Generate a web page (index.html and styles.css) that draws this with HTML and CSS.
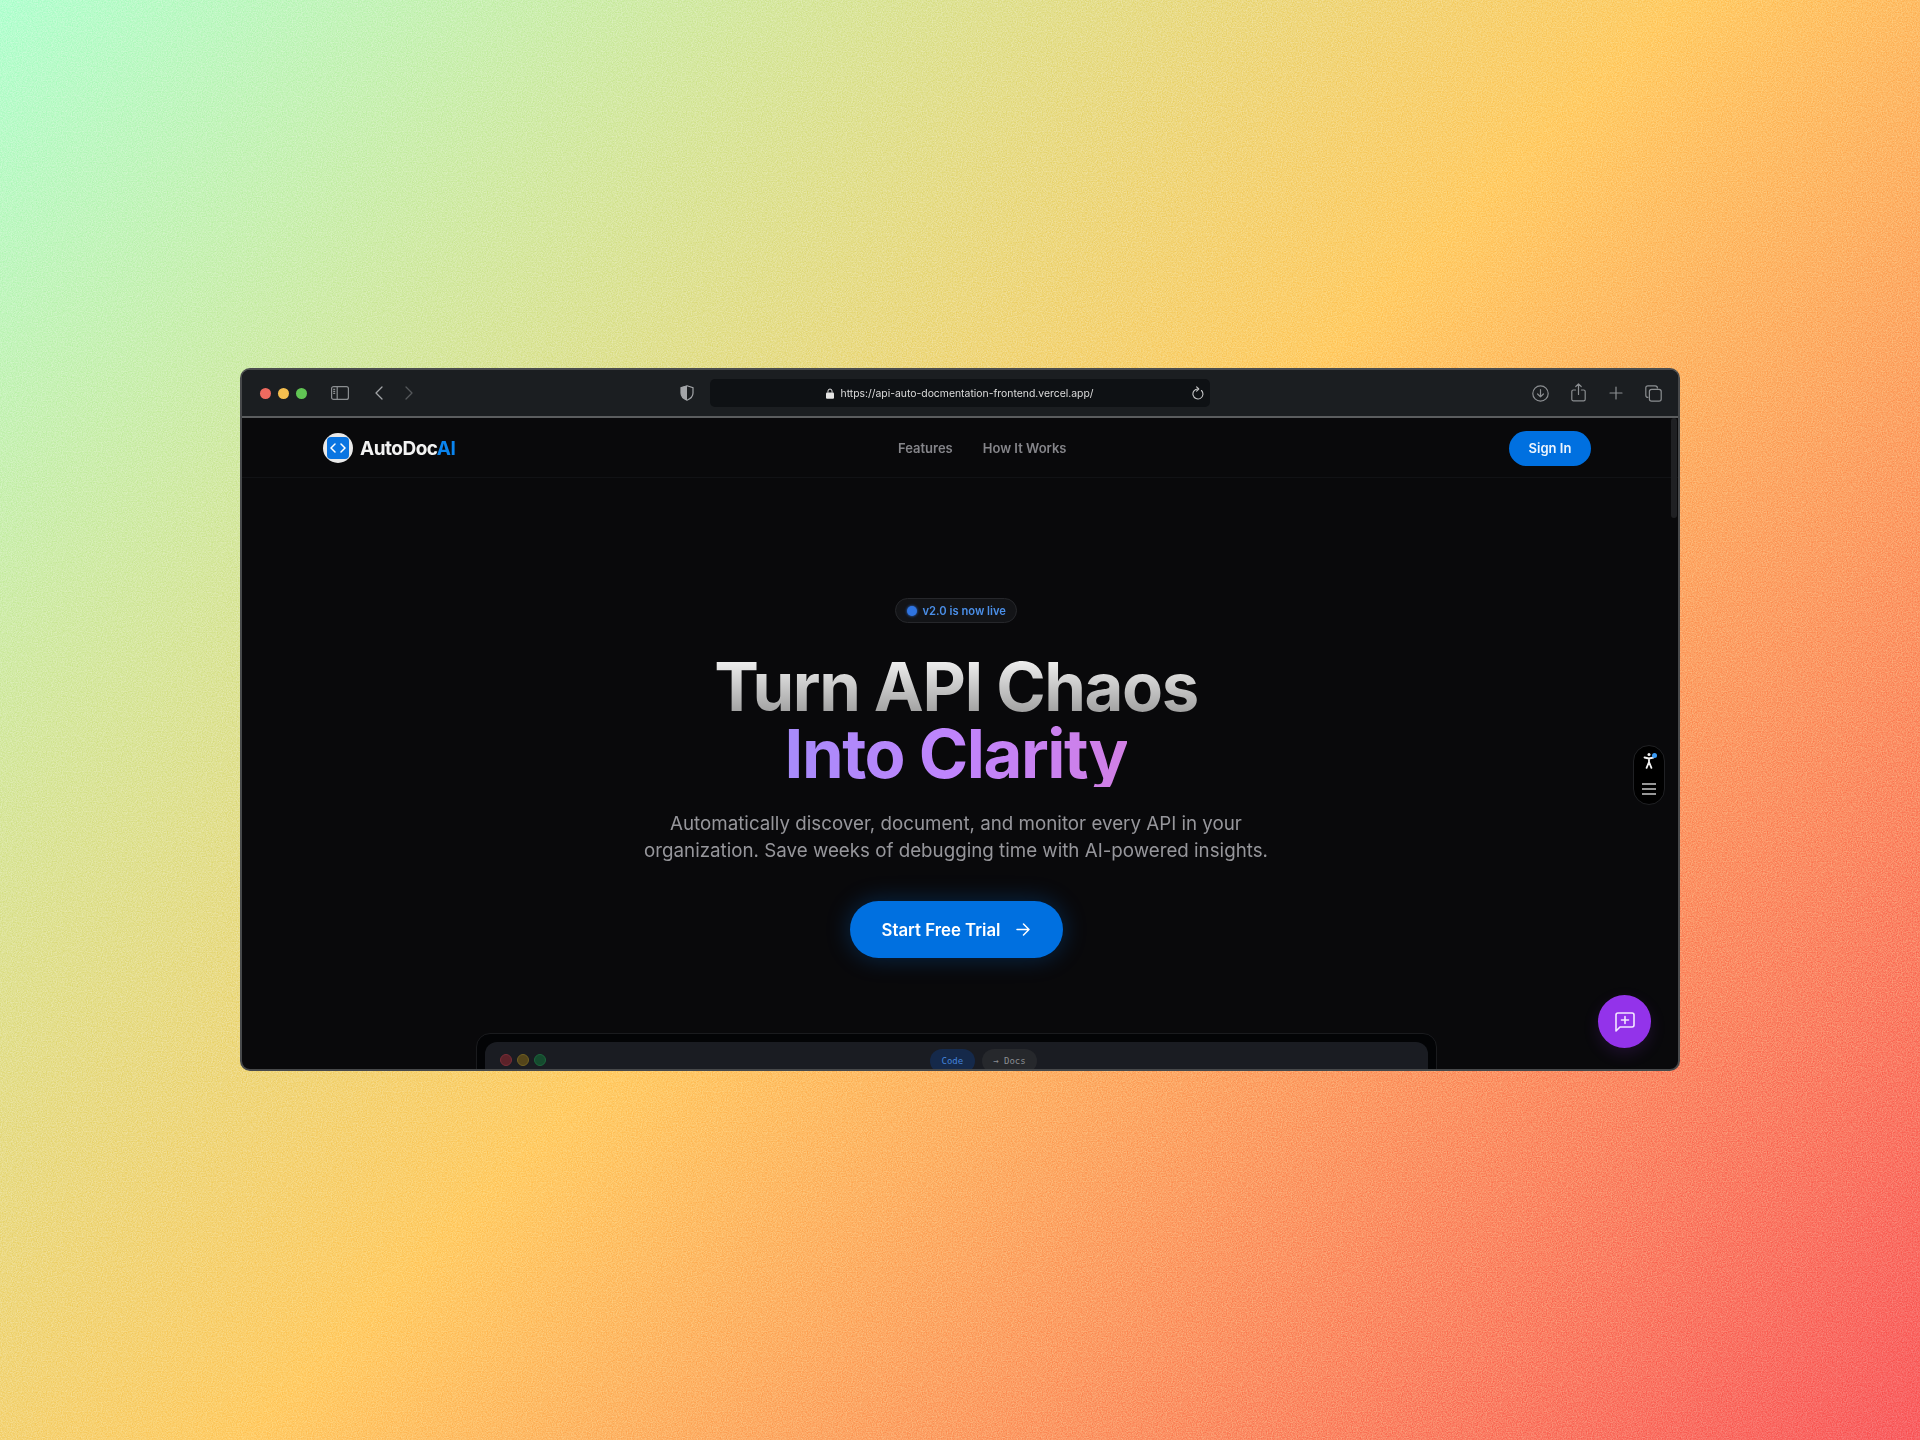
FILE: index.html
```html
<!DOCTYPE html>
<html lang="en">
<head>
  <meta charset="UTF-8" />
  <meta name="viewport" content="width=device-width, initial-scale=1.0"/>
  <title>AutoDocAI</title>
  <link rel="stylesheet" href="styles.css">
</head>
<body>

  <svg class="grain" width="1920" height="1440" aria-hidden="true">
    <filter id="noise" x="0" y="0" width="100%" height="100%" color-interpolation-filters="sRGB">
      <feTurbulence type="fractalNoise" baseFrequency="0.8" numOctaves="2" stitchTiles="stitch"/>
      <feColorMatrix type="matrix" values="1.8 0 0 0 -0.4  1.8 0 0 0 -0.4  1.8 0 0 0 -0.4  0 0 0 0 1"/>
    </filter>
    <rect width="1920" height="1440" filter="url(#noise)"/>
  </svg>

  <div class="window">
    <div class="toolbar">
      <div class="toolbar-left">
        <div class="lights">
          <span class="light red"></span>
          <span class="light yellow"></span>
          <span class="light green"></span>
        </div>
        <svg class="tool sidebar-icon" width="18" height="14" viewBox="0 0 18 14" fill="none" stroke="#8b8e91" stroke-width="1.2">
          <rect x="0.6" y="0.6" width="16.8" height="12.8" rx="2"/>
          <path d="M6.2 0.6v12.8M2.2 3.4h2M2.2 5.4h2M2.2 7.4h2"/>
        </svg>
        <svg class="tool back-icon" width="10" height="14" viewBox="0 0 10 14" fill="none" stroke="#a3a5a8" stroke-width="1.3" stroke-linecap="round" stroke-linejoin="round">
          <path d="M8 1L2 7l6 6"/>
        </svg>
        <svg class="tool forward-icon" width="10" height="14" viewBox="0 0 10 14" fill="none" stroke="#55585b" stroke-width="1.3" stroke-linecap="round" stroke-linejoin="round">
          <path d="M2 1l6 6-6 6"/>
        </svg>
      </div>

      <svg class="shield" width="14" height="16" viewBox="0 0 14 16">
        <path d="M7 0.8L13 2.6V8c0 3.4-2.6 5.8-6 7.2C3.6 13.8 1 11.4 1 8V2.6z" fill="none" stroke="#a3a5a8" stroke-width="1.2"/>
        <path d="M7 0.8L1 2.6V8c0 3.4 2.6 5.8 6 7.2z" fill="#a3a5a8"/>
      </svg>

      <div class="address">
        <svg width="8" height="11" viewBox="0 0 9 12">
          <path d="M2.2 5V3.3a2.3 2.3 0 0 1 4.6 0V5" fill="none" stroke="#e4e4e4" stroke-width="1.1"/>
          <rect y="5" width="9" height="7" rx="1.2" fill="#e4e4e4"/>
        </svg>
        <span>https://api-auto-docmentation-frontend.vercel.app/</span>
        <svg class="reload" width="12" height="14" viewBox="0 0 12 14" fill="none" stroke="#c4c5c6" stroke-width="1.1" stroke-linecap="round" stroke-linejoin="round">
          <path d="M6 3A5 5 0 1 0 9.5 4.5"/>
          <path d="M4.6 0.8L6.8 3 4.6 5.2"/>
        </svg>
      </div>

      <div class="toolbar-right">
        <svg width="17" height="17" viewBox="0 0 17 17" fill="none" stroke="#8b8e91" stroke-width="1.2" stroke-linecap="round" stroke-linejoin="round">
          <circle cx="8.5" cy="8.5" r="7.7"/>
          <path d="M8.5 4.6v7.2M5.6 9l2.9 2.9L11.4 9"/>
        </svg>
        <svg class="share-icon" width="15" height="19" viewBox="0 0 15 19" fill="none" stroke="#8b8e91" stroke-width="1.2" stroke-linecap="round" stroke-linejoin="round">
          <path d="M4.6 7H2.4a1.6 1.6 0 0 0-1.6 1.6v7.6a1.6 1.6 0 0 0 1.6 1.6h10.2a1.6 1.6 0 0 0 1.6-1.6V8.6A1.6 1.6 0 0 0 12.6 7h-2.2"/>
          <path d="M7.5 11.5V1M4.8 3.5L7.5 0.9l2.7 2.6"/>
        </svg>
        <svg width="14" height="14" viewBox="0 0 14 14" fill="none" stroke="#8b8e91" stroke-width="1.2" stroke-linecap="round">
          <path d="M7 1v12M1 7h12"/>
        </svg>
        <svg width="17" height="17" viewBox="0 0 17 17" fill="none" stroke="#8b8e91" stroke-width="1.2">
          <path d="M3.4 12.4H3a2.2 2.2 0 0 1-2.2-2.2V3A2.2 2.2 0 0 1 3 0.8h7.2A2.2 2.2 0 0 1 12.4 3v.4"/>
          <rect x="4.4" y="4.4" width="11.8" height="11.8" rx="2.2"/>
        </svg>
      </div>
    </div>

    <div class="page">
      <div class="nav">
        <a class="brand" href="#">
          <span class="brand-mark">
            <span class="brand-square">
              <svg width="16" height="10" viewBox="0 0 16 10" fill="none" stroke="#fff" stroke-width="1.5" stroke-linecap="round" stroke-linejoin="round">
                <path d="M5 1L1 5l4 4M11 1l4 4-4 4"/>
              </svg>
            </span>
          </span>
          <span>AutoDoc<span class="brand-ai">AI</span></span>
        </a>
        <div class="nav-links">
          <a href="#">Features</a>
          <a href="#">How It Works</a>
        </div>
        <a class="sign-in" href="#">Sign In</a>
      </div>

      <div class="hero">
        <div class="badge"><span class="badge-dot"></span>v2.0 is now live</div>
        <h1>
          <span class="line-one">Turn API Chaos</span>
          <span class="line-two">Into Clarity</span>
        </h1>
        <p>Automatically discover, document, and monitor every API in your<br>organization. Save weeks of debugging time with AI-powered insights.</p>
        <a class="cta" href="#">
          Start Free Trial
          <svg width="14" height="13" viewBox="0 0 14 13" fill="none" stroke="#fff" stroke-width="1.5" stroke-linecap="round" stroke-linejoin="round">
            <path d="M1 6.5h12M7.5 1L13 6.5 7.5 12"/>
          </svg>
        </a>
      </div>

      <div class="preview">
        <div class="preview-bar">
          <div class="preview-dots">
            <span class="pdot pdot-red"></span>
            <span class="pdot pdot-yellow"></span>
            <span class="pdot pdot-green"></span>
          </div>
          <div class="preview-tabs">
            <span class="tab tab-active">Code</span>
            <span class="tab">→ Docs</span>
          </div>
        </div>
      </div>

      <div class="scrollbar"></div>

      <div class="a11y">
        <svg width="15" height="17" viewBox="0 0 15 17" fill="none" stroke="#f2f2f2" stroke-width="1.8" stroke-linecap="round" stroke-linejoin="round">
          <circle cx="7" cy="2.5" r="1.5" fill="#f2f2f2" stroke="none"/>
          <path d="M2.5 5.5l4.5 1 4.5-1M7 6.5v3.5M7 10L4.6 15.800M7 10l2.400 5.800"/>
        </svg>
        <span class="a11y-dot"></span>
        <svg class="a11y-menu" width="14" height="12" viewBox="0 0 14 12" fill="none" stroke="#c9c9c9" stroke-width="1.4">
          <path d="M0 1h14M0 6h14M0 11h14"/>
        </svg>
      </div>

      <button class="fab">
        <svg width="20" height="20" viewBox="0 0 20 20" fill="none" stroke="#f3e8ff" stroke-width="1.6" stroke-linecap="round" stroke-linejoin="round">
          <path d="M1 19V3a2 2 0 0 1 2-2h14a2 2 0 0 1 2 2v10a2 2 0 0 1-2 2H5z"/>
          <path d="M10 4.5v7M6.5 8h7"/>
        </svg>
      </button>
    </div>
  </div>

</body>
</html>
```

FILE: styles.css
```css
* {
  box-sizing: border-box;
  margin: 0;
  padding: 0;
}

body {
  position: relative;
  width: 1920px;
  height: 1440px;
  padding: 368px 240px 0;
  overflow: hidden;
  font-family: Inter, "Liberation Sans", sans-serif;
  background: linear-gradient(135deg, #b3ffd1 0%, #ffcc66 50%, #f95f62 100%);
}

a {
  text-decoration: none;
}

.grain {
  position: absolute;
  top: 0;
  left: 0;
  opacity: 0.22;
  mix-blend-mode: overlay;
}

.window {
  position: relative;
  width: 1440px;
  height: 703px;
  display: flex;
  flex-direction: column;
  border: 2px solid #47494b;
  border-top-color: #4a4c4e;
  border-radius: 10px;
  overflow: hidden;
  background-color: #09090b;
}

/* browser chrome */
.toolbar {
  position: relative;
  flex: none;
  height: 48px;
  display: flex;
  align-items: center;
  background-color: #1b1e21;
  border-bottom: 2px solid #5b5d5f;
}

.toolbar-left {
  display: flex;
  align-items: center;
  padding-left: 18px;
}

.lights {
  display: flex;
  gap: 7px;
}

.light {
  width: 11px;
  height: 11px;
  border-radius: 50%;
}

.red { background-color: #ee6a5f; }
.yellow { background-color: #f5bf4f; }
.green { background-color: #61c554; }

.sidebar-icon { margin-left: 24px; }
.back-icon { margin-left: 25px; }
.forward-icon { margin-left: 20px; }

.shield {
  position: absolute;
  left: 438px;
  top: 15px;
}

.address {
  position: absolute;
  left: 468px;
  top: 9px;
  width: 500px;
  height: 28px;
  display: flex;
  align-items: center;
  justify-content: center;
  gap: 6px;
  background-color: #0e1114;
  border-radius: 5px;
  color: #dcdcdc;
  font-size: 10.4px;
}

.reload {
  position: absolute;
  right: 6px;
  top: 7px;
}

.toolbar-right {
  margin-left: auto;
  display: flex;
  align-items: center;
  gap: 22.5px;
  padding-right: 16px;
}

.share-icon {
  margin-bottom: 2px;
}

/* site */
.page {
  position: relative;
  flex: 1;
  overflow: hidden;
}

.nav {
  position: relative;
  height: 60px;
  display: flex;
  align-items: center;
  justify-content: space-between;
  padding: 1px 87px 0 81px;
  border-bottom: 1px solid #111215;
}

.brand {
  display: flex;
  align-items: center;
  gap: 7px;
  color: #f2f2f2;
  font-size: 19px;
  font-weight: 700;
  letter-spacing: -0.5px;
}

.brand-ai {
  color: #0a84ee;
}

.brand-mark {
  width: 30px;
  height: 30px;
  display: flex;
  align-items: center;
  justify-content: center;
  background-color: #e9e9e9;
  border-radius: 50%;
}

.brand-square {
  width: 22px;
  height: 22px;
  display: flex;
  align-items: center;
  justify-content: center;
  background-color: #0a75e2;
  border-radius: 4px;
}

.nav-links {
  position: absolute;
  left: 656px;
  display: flex;
  gap: 30px;
}

.nav-links a {
  color: #85858a;
  font-size: 13px;
  font-weight: 600;
}

.sign-in {
  width: 82px;
  height: 35px;
  display: flex;
  align-items: center;
  justify-content: center;
  background-color: #0070e0;
  border-radius: 18px;
  color: #eef5fd;
  font-size: 13px;
  font-weight: 600;
}

.hero {
  display: flex;
  flex-direction: column;
  align-items: center;
  padding-top: 120px;
  margin-right: 8px;
}

.badge {
  height: 25px;
  padding: 0 10.5px 0 11px;
  display: flex;
  align-items: center;
  gap: 6px;
  background-color: #131417;
  border: 1px solid #26272b;
  border-radius: 13px;
  color: #4b8fe8;
  font-size: 11.2px;
  font-weight: 600;
}

.badge-dot {
  width: 10px;
  height: 10px;
  background-color: #2f74e0;
  border-radius: 50%;
  box-shadow: 0 0 3px #2f74e0;
}

h1 {
  margin-top: 30px;
  font-size: 67px;
  font-weight: 700;
  line-height: 67px;
  letter-spacing: -1.45px;
  text-align: center;
}

h1 span {
  display: block;
  -webkit-background-clip: text;
  background-clip: text;
  color: transparent;
}

.line-one {
  background-image: linear-gradient(180deg, #f0f0f0 10%, #a0a0a0 90%);
}

.line-two {
  width: fit-content;
  margin: 0 auto;
  background-image: linear-gradient(90deg, #a78bfa 0%, #c084fc 50%, #d17fe4 100%);
}

p {
  margin-top: 24px;
  color: #96969b;
  font-size: 18.75px;
  line-height: 26.5px;
  text-align: center;
}

.cta {
  margin-top: 37px;
  width: 213px;
  height: 57px;
  display: flex;
  align-items: center;
  justify-content: center;
  gap: 16px;
  background-color: #0070e0;
  border-radius: 29px;
  box-shadow: 0 0 24px rgba(0, 112, 224, 0.3);
  color: #fff;
  font-size: 16.8px;
  font-weight: 600;
}

.preview {
  position: absolute;
  left: 234px;
  top: 615px;
  width: 961px;
  height: 60px;
  padding: 8px;
  background-color: #030406;
  border: 1px solid #1a1b1e;
  border-radius: 14px;
}

.preview-bar {
  position: relative;
  height: 50px;
  display: flex;
  padding: 7px 0 0 15px;
  background-color: #1a1c22;
  border-radius: 12px;
}

.preview-dots {
  display: flex;
  gap: 5px;
  padding-top: 5px;
}

.pdot {
  width: 12px;
  height: 12px;
  border-radius: 50%;
  border: 1px solid;
}

.pdot-red { background-color: #5c2229; border-color: #7a2d37; }
.pdot-yellow { background-color: #54451a; border-color: #706022; }
.pdot-green { background-color: #154a2e; border-color: #1c663c; }

.preview-tabs {
  position: absolute;
  left: 445px;
  top: 7px;
  display: flex;
  gap: 7px;
}

.tab {
  height: 24px;
  padding: 0 11.5px;
  display: flex;
  align-items: center;
  background-color: #26282c;
  border-radius: 12px;
  color: #8a8d92;
  font-family: "DejaVu Sans Mono", monospace;
  font-size: 9px;
}

.tab-active {
  background-color: #15294a;
  color: #4383dc;
}

.scrollbar {
  position: absolute;
  right: 1px;
  top: 0;
  width: 6px;
  height: 100px;
  background-color: #1f2023;
  border-radius: 3px;
}

.a11y {
  position: absolute;
  left: 1391px;
  top: 327px;
  width: 32px;
  height: 60px;
  display: flex;
  flex-direction: column;
  align-items: center;
  padding-top: 6px;
  background-color: #000;
  border: 1px solid #202124;
  border-radius: 16px;
}

.a11y-menu {
  margin-top: 14px;
}

.a11y-dot {
  position: absolute;
  left: 18px;
  top: 7px;
  width: 5px;
  height: 5px;
  background-color: #3b9bf5;
  border-radius: 50%;
}

.fab {
  position: absolute;
  left: 1356px;
  top: 577px;
  width: 53px;
  height: 53px;
  display: flex;
  align-items: center;
  justify-content: center;
  background-color: #9333ea;
  border: none;
  border-radius: 50%;
  box-shadow: 0 6px 16px rgba(147, 51, 234, 0.15);
}
```
